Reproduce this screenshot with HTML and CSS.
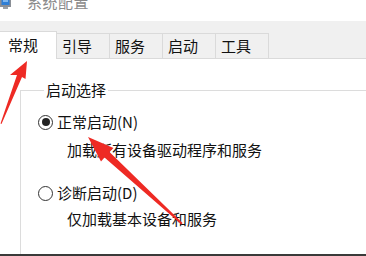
FILE: index.html
```html
<!DOCTYPE html>
<html lang="zh-CN">
<head>
<meta charset="utf-8">
<title>系统配置</title>
<link rel="stylesheet" href="styles.css">
</head>
<body>
<div class="window">
  <div class="titlebar">
    <svg class="app-icon" width="12" height="10" viewBox="0 0 12 10">
      <rect x="0" y="-4" width="11" height="11" fill="#8a8f96"/>
      <rect x="1.5" y="-3" width="8" height="8" fill="#2f7fd6"/>
      <rect x="3" y="-2" width="5" height="4" fill="#7fb8f0"/>
      <rect x="3" y="7" width="5" height="2" fill="#9aa0a6"/>
    </svg>
    <span class="title">系统配置</span>
  </div>
  <div class="tabstrip">
    <div class="tab selected">常规</div>
    <div class="tab">引导</div>
    <div class="tab">服务</div>
    <div class="tab">启动</div>
    <div class="tab">工具</div>
  </div>
  <div class="content">
    <fieldset class="group">
      <legend class="legend">启动选择</legend>
      <div class="option">
        <span class="radio checked"></span>
        <span class="label">正常启动(N)</span>
      </div>
      <div class="desc first">加载所有设备驱动程序和服务</div>
      <div class="option second">
        <span class="radio"></span>
        <span class="label">诊断启动(D)</span>
      </div>
      <div class="desc">仅加载基本设备和服务</div>
    </fieldset>
  </div>
  <div class="bottom-edge"></div>
  <svg class="annotations" width="366" height="256" viewBox="0 0 366 256">
    <polygon points="27,61 25.5,79 22,77 1.5,124 0.5,123.5 17,75 10,75" fill="#ee2a24"/>
    <polygon points="88,137 113.5,148 109.5,152 182.5,223 181.5,224.5 104.5,157.5 101,161.5" fill="#ee2a24"/>
  </svg>
</div>
</body>
</html>
```

FILE: styles.css
```css
html, body {
  margin: 0;
  padding: 0;
  background: #ffffff;
}

body {
  width: 366px;
  height: 256px;
  overflow: hidden;
  font-family: "Noto Sans CJK SC", "Noto Sans", "Liberation Sans", sans-serif;
  font-size: 15px;
  color: #111111;
}

.window {
  position: relative;
  width: 366px;
  height: 256px;
  display: flex;
  flex-direction: column;
  overflow: hidden;
}

.titlebar {
  height: 21px;
  flex: none;
  display: flex;
  align-items: flex-start;
  gap: 15px;
  overflow: hidden;
  background: #ffffff;
}

.app-icon {
  flex: none;
  display: block;
}

.title {
  display: block;
  line-height: 15px;
  margin-top: -6px;
  color: #8a8a8a;
  letter-spacing: 0.5px;
}

.tabstrip {
  height: 37px;
  flex: none;
  display: flex;
  align-items: flex-end;
  background: #f0f0f0;
  border-bottom: 1px solid #dadada;
}

.tab {
  box-sizing: border-box;
  width: 53px;
  height: 25px;
  padding-left: 5px;
  line-height: 23px;
  border: 1px solid #dadada;
  border-left: none;
  border-bottom: none;
  background: #f0f0f0;
  color: #111111;
}

.tab.selected {
  width: 57px;
  height: 28px;
  padding-left: 8px;
  line-height: 26px;
  background: #ffffff;
  margin-bottom: -1px;
  position: relative;
}

.content {
  flex: 1;
  display: flex;
  flex-direction: column;
  background: #ffffff;
}

.group {
  flex: 1;
  margin: 22px 0 0 20px;
  padding: 0 0 0 17px;
  border: 1px solid #dcdcdc;
  border-right: none;
  border-bottom: none;
  min-width: 0;
}

.legend {
  margin-left: 6px;
  padding: 0 2px;
  line-height: 18px;
  color: #111111;
}

.option {
  display: flex;
  align-items: center;
  gap: 4px;
  height: 20px;
  margin-top: 13px;
}

.option.second {
  margin-top: 23px;
}

.radio {
  box-sizing: border-box;
  width: 15px;
  height: 15px;
  border: 1.3px solid #333333;
  border-radius: 50%;
  background: #ffffff;
  display: flex;
  align-items: center;
  justify-content: center;
  flex: none;
}

.radio.checked::after {
  content: "";
  width: 8px;
  height: 8px;
  border-radius: 50%;
  background: #222222;
}

.label {
  line-height: 20px;
}

.desc {
  padding-left: 29px;
  line-height: 20px;
  margin-top: 6px;
}

.desc.first {
  margin-top: 8px;
}

.bottom-edge {
  height: 2px;
  flex: none;
  background: #3a3a3a;
}

.annotations {
  position: absolute;
  left: 0;
  top: 0;
  pointer-events: none;
}
```
